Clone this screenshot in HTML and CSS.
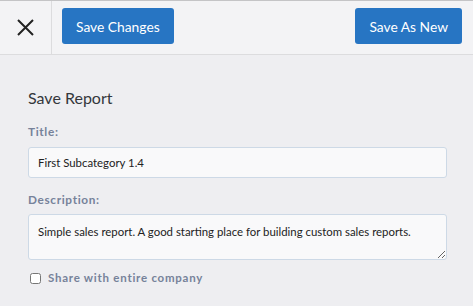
FILE: index.html
```html
<!DOCTYPE html>
<html>
<head>
<meta charset="utf-8">
<link rel="stylesheet" href="styles.css">
</head>
<body>
<div class="topbar">
  <div class="close">
    <svg width="17" height="17" viewBox="0 0 17 17"><path d="M1 1 L16 16 M16 1 L1 16" stroke="#222" stroke-width="2" fill="none"/></svg>
  </div>
  <div class="actions">
    <button class="btn">Save Changes</button>
    <button class="btn">Save As New</button>
  </div>
</div>
<div class="content">
  <h2 class="heading">Save Report</h2>
  <label class="label">Title:</label>
  <input class="input" type="text" value="First Subcategory 1.4">
  <label class="label desc-label">Description:</label>
  <textarea class="textarea">Simple sales report. A good starting place for building custom sales reports.</textarea>
  <label class="check"><input type="checkbox" class="cb"><span>Share with entire company</span></label>
</div>
</body>
</html>
```
FILE: styles.css
```css
html, body { margin: 0; padding: 0; }
body {
  width: 473px; height: 306px; overflow: hidden;
  background: #eeeef1;
  font-family: Lato, "Open Sans", sans-serif;
  border-top: 1px solid #c4c4c6;
  box-sizing: border-box;
}
.topbar {
  display: flex;
  height: 53px;
  background: #f3f3f5;
  border-bottom: 1px solid #dcdcde;
}
.close {
  width: 51px;
  border-right: 1px solid #dcdcde;
  display: flex; align-items: center; justify-content: center;
}
.actions {
  flex: 1;
  display: flex; justify-content: space-between; align-items: flex-start;
  padding: 7px 11px 0 10px;
}
.btn {
  height: 36px;
  background: #2775c3;
  color: #fff;
  border: none;
  border-radius: 3px;
  font-family: Lato, sans-serif;
  font-size: 13.8px;
  padding: 0 14px;
}
.content {
  padding: 33px 26px 0 28px;
  display: flex; flex-direction: column;
}
.heading {
  margin: 0;
  font-size: 16px;
  font-weight: 400;
  color: #34373c;
  line-height: 20px;
}
.label {
  margin-top: 16px;
  font-size: 11.8px;
  font-weight: 700;
  color: #76829a;
  letter-spacing: 0.65px;
  line-height: 16px;
}
.desc-label { margin-top: 14px; }
.input, .textarea {
  margin-top: 7px;
  background: #f9f9fa;
  border: 1px solid #cdd9e6;
  border-radius: 3px;
  font-family: Lato, sans-serif;
  font-size: 11.4px;
  color: #222;
  box-sizing: border-box;
  outline: none;
}
.input { height: 31px; padding: 0 9px; }
.textarea { margin-top: 6px; height: 46px; padding: 9px 9px 0; resize: vertical; line-height: 16px; }
.check {
  margin-top: 10px;
  display: flex; align-items: center;
  font-size: 11.5px; font-weight: 700; color: #76829a; letter-spacing: 0.75px;
  line-height: 16px;
}
.cb { margin: 0 7px 0 2px; width: 11px; height: 11px; }
```
